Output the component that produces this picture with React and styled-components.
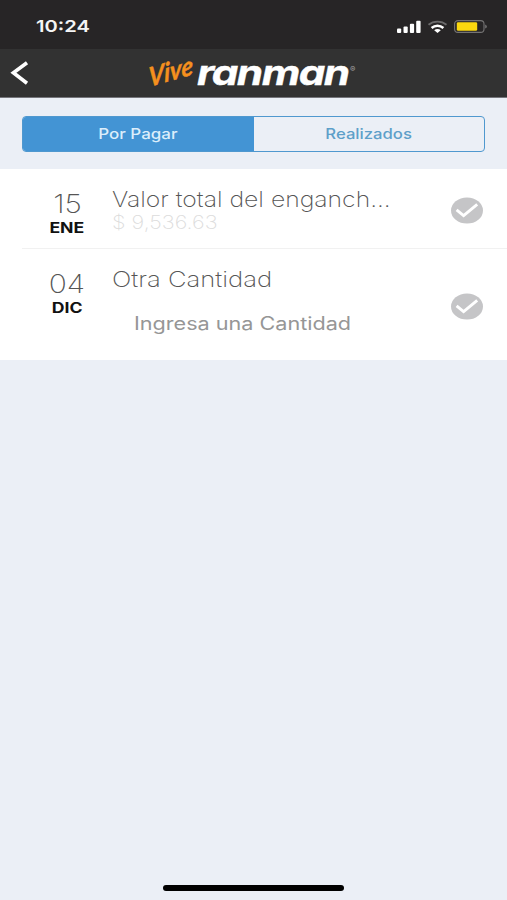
import React, { useState } from 'react';
import styled, { createGlobalStyle } from 'styled-components';

const payments = [
  {
    id: 1,
    day: '15',
    month: 'ENE',
    title: 'Valor total del enganch...',
    amount: '$ 9,536.63',
    titleStretch: 1.125,
  },
  {
    id: 2,
    day: '04',
    month: 'DIC',
    title: 'Otra Cantidad',
    placeholder: 'Ingresa una Cantidad',
    titleStretch: 1.165,
  },
];

function CheckMark() {
  return (
    <CheckIcon viewBox="0 0 32 27">
      <ellipse cx="16" cy="13.5" rx="16" ry="13.1" fill="#c5c5c7" />
      <path
        d="M5.6 12.9L12.6 18.6L26.2 7.4"
        fill="none"
        stroke="#ffffff"
        strokeWidth="2.9"
      />
    </CheckIcon>
  );
}

function StatusIcons() {
  return (
    <StatusSvg viewBox="0 0 92 16">
      <g fill="#ffffff">
        <rect x="0" y="8.6" width="4.2" height="4.4" rx="1" />
        <rect x="6.5" y="6.4" width="4.2" height="6.6" rx="1" />
        <rect x="12.9" y="3.8" width="4.2" height="9.2" rx="1" />
        <rect x="19.2" y="0.8" width="4.4" height="12.2" rx="1" />
      </g>
      <g fill="none">
        <path d="M31.5 4.8C36.5 0.6 44.5 0.6 49.5 4.8" stroke="#6b6a6b" strokeWidth="1.8" />
        <path d="M34.6 8C38 5 43 5 46.4 8" stroke="#ffffff" strokeWidth="2.5" />
      </g>
      <path d="M37.2 10.2C39.1 8.7 41.9 8.7 43.8 10.2L40.5 13Z" fill="#ffffff" />
      <rect x="57.6" y="0.6" width="29.4" height="11.8" rx="3.4" fill="none" stroke="#757474" strokeWidth="1.1" />
      <rect x="59.8" y="2.2" width="20.4" height="8.6" rx="1.4" fill="#fbd80f" />
      <path d="M88.2 4.4Q91.6 6.5 88.2 8.6Z" fill="#757474" />
    </StatusSvg>
  );
}

function Logo() {
  return (
    <LogoSvg viewBox="0 0 212 48">
      <text
        transform="translate(4 38) rotate(-16) skewX(-14)"
        fill="#f5901e"
        stroke="#f5901e"
        strokeWidth="0.4"
        fontFamily="Lato, sans-serif"
        fontSize="26"
        fontWeight="700"
        fontStyle="italic"
        textLength="46"
        lengthAdjust="spacingAndGlyphs"
      >
        Vive
      </text>
      <text
        transform="translate(52 35.5) scale(1.33 1)"
        fill="#ffffff"
        stroke="#ffffff"
        strokeWidth="0.4"
        fontFamily="Inter, sans-serif"
        fontSize="34"
        fontWeight="700"
        fontStyle="italic"
        letterSpacing="-1.2"
        textLength="114"
        lengthAdjust="spacingAndGlyphs"
      >
        ranman
      </text>
      <text x="205" y="23" fill="#a5a5a5" fontFamily="Inter, sans-serif" fontSize="8">
        ®
      </text>
    </LogoSvg>
  );
}

function PaymentRow({ payment }) {
  return (
    <Row $tall={!!payment.placeholder}>
      <DateBox>
        <Day $stretch={1.15}>{payment.day}</Day>
        <Month $stretch={1.26}>{payment.month}</Month>
      </DateBox>
      <Detail>
        <Title $stretch={payment.titleStretch}>{payment.title}</Title>
        {payment.amount && <Amount $stretch={1.14}>{payment.amount}</Amount>}
        {payment.placeholder && (
          <Placeholder $stretch={1.2}>{payment.placeholder}</Placeholder>
        )}
      </Detail>
      <CheckMark />
    </Row>
  );
}

function App() {
  const [tab, setTab] = useState('pending');

  return (
    <>
      <GlobalStyle />
      <Screen>
        <StatusBar>
          <Time $stretch={1.22}>10:24</Time>
          <StatusIcons />
        </StatusBar>
        <NavBar>
          <BackIcon viewBox="0 0 20 26">
            <path d="M17 2.8L3.4 12.8L17 23.2" fill="none" stroke="#ffffff" strokeWidth="3.6" />
          </BackIcon>
          <Logo />
        </NavBar>
        <TabSection>
          <Tabs>
            <Tab $active={tab === 'pending'} onClick={() => setTab('pending')}>
              <TabLabel $stretch={1.17}>Por Pagar</TabLabel>
            </Tab>
            <Tab $active={tab === 'done'} onClick={() => setTab('done')}>
              <TabLabel $stretch={1.15}>Realizados</TabLabel>
            </Tab>
          </Tabs>
        </TabSection>
        <List>
          {payments.map((payment) => (
            <PaymentRow key={payment.id} payment={payment} />
          ))}
        </List>
        <HomeIndicator />
      </Screen>
    </>
  );
}

const GlobalStyle = createGlobalStyle`
  * {
    box-sizing: border-box;
  }
  body {
    margin: 0;
    background-color: #ebeff6;
    font-family: Inter, 'Liberation Sans', sans-serif;
  }
`;

const Screen = styled.div`
  display: flex;
  flex-direction: column;
  width: 100%;
  height: 900px;
  background-color: #ebeff6;
`;

const WideText = styled.span`
  display: block;
  white-space: nowrap;
  transform: scaleX(${({ $stretch }) => $stretch});
  transform-origin: left center;
`;

const StatusBar = styled.header`
  display: flex;
  justify-content: space-between;
  height: 49px;
  padding: 16px 18px 0 36px;
  background-color: #272526;
`;

const Time = styled(WideText)`
  height: 20px;
  font-size: 16.5px;
  font-weight: 600;
  line-height: 20px;
  color: #f5f5f5;
`;

const StatusSvg = styled.svg`
  width: 92px;
  height: 16px;
  margin-top: 4px;
`;

const NavBar = styled.nav`
  display: flex;
  align-items: center;
  gap: 115px;
  height: 49px;
  padding-left: 10px;
  border-bottom: 1px solid #75757b;
  background-color: #323232;
`;

const BackIcon = styled.svg`
  width: 20px;
  height: 26px;
`;

const LogoSvg = styled.svg`
  width: 212px;
  height: 48px;
  overflow: visible;
`;

const TabSection = styled.div`
  height: 71px;
  padding: 18px 22px 0;
`;

const Tabs = styled.div`
  display: flex;
  height: 36px;
  border: 1px solid #4f98cf;
  border-radius: 4px;
  overflow: hidden;
`;

const Tab = styled.button`
  display: flex;
  justify-content: center;
  flex: 1;
  padding: 7px 0 0;
  border: none;
  background-color: ${({ $active }) => ($active ? '#4394d4' : 'transparent')};
  color: ${({ $active }) => ($active ? '#dceefb' : '#5d9fc9')};
  font-family: inherit;
  cursor: pointer;
`;

const TabLabel = styled(WideText)`
  font-size: 14.5px;
  font-weight: 500;
  line-height: 20px;
  transform-origin: center;
`;

const List = styled.main`
  background-color: #ffffff;
`;

const Row = styled.div`
  display: flex;
  align-items: center;
  height: ${({ $tall }) => ($tall ? '112px' : '79px')};
  padding: 3px 24px 0 0;
  margin-left: 22px;
  border-top: ${({ $tall }) => ($tall ? '1px solid #f1f1f1' : 'none')};
`;

const DateBox = styled.div`
  display: flex;
  flex-direction: column;
  align-items: center;
  align-self: flex-start;
  width: 90px;
  padding-top: 16px;
`;

const Day = styled(WideText)`
  font-size: 26px;
  font-weight: 200;
  line-height: 32px;
  color: #555555;
  transform-origin: center;
`;

const Month = styled(WideText)`
  font-size: 14px;
  font-weight: 700;
  line-height: 16px;
  color: #111111;
  transform-origin: center;
`;

const Detail = styled.div`
  flex: 1;
  align-self: flex-start;
  min-width: 0;
  padding-top: 15px;
`;

const Title = styled(WideText)`
  font-size: 22px;
  font-weight: 200;
  line-height: 25px;
  color: #555555;
`;

const Amount = styled(WideText)`
  font-size: 19px;
  font-weight: 200;
  line-height: 21px;
  color: #dcdcdc;
`;

const Placeholder = styled(WideText)`
  margin: 21px 0 0 22px;
  font-size: 18px;
  font-weight: 400;
  line-height: 22px;
  color: #969696;
`;

const CheckIcon = styled.svg`
  flex-shrink: 0;
  width: 32px;
  height: 27px;
`;

const HomeIndicator = styled.div`
  width: 181px;
  height: 6px;
  margin: auto auto 9px;
  border-radius: 3px;
  background-color: #000000;
`;

export default App;
